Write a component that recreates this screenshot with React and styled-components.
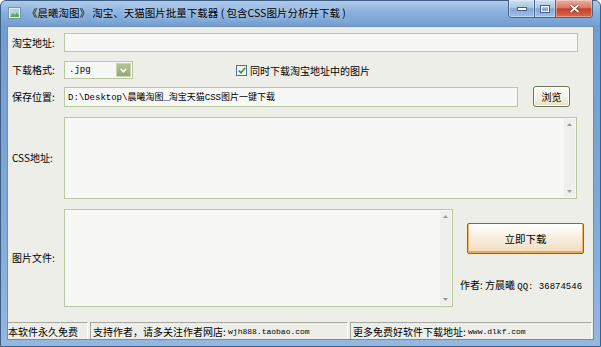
import React from "react"
import styled, { createGlobalStyle } from "styled-components"

const CJK = `"Noto Sans CJK SC", "Liberation Sans", sans-serif`
const MONO = `"Liberation Mono", "Noto Sans CJK SC", monospace`

const GlobalStyle = createGlobalStyle`
	html, body {
		margin: 0;
		padding: 0;
		background: #ffffff;
	}
	body {
		font-family: ${CJK};
		color: #000;
	}
`

const Window = styled.div`
	width: 601px;
	height: 347px;
	box-sizing: border-box;
	display: flex;
	flex-direction: column;
	border: 1px solid #3d5e85;
	border-radius: 6px 6px 0 0;
	padding: 0 6px 6px;
	background: linear-gradient(to bottom, #b0cbea 0px, #88afdc 12px, #729dd2 26px, #80a8d8 200px, #93b8e1 100%);
`

const TitleBar = styled.div`
	height: 25px;
	display: flex;
	align-items: flex-start;
	flex-shrink: 0;
`

const TitleIcon = styled.svg`
	margin: 6px 0 0 1px;
	flex-shrink: 0;
`

const Title = styled.div`
	margin: 5px 0 0 6px;
	font-size: 10.5px;
	line-height: 14px;
	white-space: nowrap;
	flex: 1;
	text-shadow: 0 0 6px rgba(255, 255, 255, 0.7);
`

const Controls = styled.div`
	display: flex;
	margin-right: 1px;
	margin-top: -1px;
	border: 1px solid #46638b;
	border-top: none;
	border-radius: 0 0 4px 4px;
	overflow: hidden;
`

const CtrlButton = styled.div`
	width: ${(p) => p.$w}px;
	height: 17px;
	display: flex;
	align-items: center;
	justify-content: center;
	box-sizing: border-box;
	border-left: ${(p) => (p.$first ? "none" : "1px solid #46638b")};
	background: ${(p) =>
		p.$close
			? "linear-gradient(to bottom, #eab0a2 0%, #d87a66 45%, #c5402a 52%, #d86a50 100%)"
			: "linear-gradient(to bottom, #cfe0f2 0%, #a9c4e5 45%, #84a7d3 52%, #a2c1e5 100%)"};
	box-shadow: inset 0 0 0 1px rgba(255, 255, 255, 0.35);
`

const Body = styled.div`
	flex: 1;
	display: flex;
	flex-direction: column;
	background: #eeeee9;
	border: 1px solid #6f8cb3;
`

const Form = styled.div`
	flex: 1;
	display: flex;
	flex-direction: column;
	padding: 6px 0 0 4px;
`

const Row = styled.div`
	display: flex;
	align-items: center;
	height: ${(p) => p.$h}px;
	margin-top: ${(p) => p.$mt || 0}px;
`

const Label = styled.div`
	width: 52px;
	flex-shrink: 0;
	font-size: 10px;
	line-height: 12px;
	white-space: nowrap;
	align-self: center;
`

const TextInput = styled.input`
	width: ${(p) => p.$w}px;
	height: ${(p) => p.$h}px;
	box-sizing: border-box;
	border: 1px solid #b9c7a2;
	background: #f7f7f5;
	padding: 0 3px;
	margin: 0;
	font-family: ${MONO};
	font-size: 9px;
	color: #000;
	outline: none;
`

const Combo = styled.div`
	width: 69px;
	height: 18px;
	box-sizing: border-box;
	border: 1px solid #b9c7a2;
	background: #f7f7f5;
	display: flex;
	align-items: center;
	justify-content: space-between;
	padding: 0 1px 0 4px;
	font-family: ${MONO};
	font-size: 9px;
`

const ComboArrow = styled.div`
	width: 15px;
	height: 14px;
	background: linear-gradient(to bottom, #b4c396, #96a973);
	border: 1px solid #c9d4b4;
	box-sizing: border-box;
	display: flex;
	align-items: center;
	justify-content: center;
`

const CheckWrap = styled.label`
	display: flex;
	align-items: center;
	margin-left: 103px;
	font-size: 10px;
	white-space: nowrap;
`

const CheckBox = styled.span`
	width: 11px;
	height: 11px;
	box-sizing: border-box;
	border: 1px solid #4f6f9c;
	background: linear-gradient(to bottom right, #e8ecf0, #ffffff);
	display: flex;
	align-items: center;
	justify-content: center;
	margin-right: 3px;
`

const SmallButton = styled.div`
	width: 37px;
	height: 21px;
	margin-left: 15px;
	box-sizing: border-box;
	border: 1px solid #6a7858;
	border-radius: 3px;
	background: linear-gradient(to bottom, #fdfdfb 0%, #f5f1e6 50%, #e9e0c8 100%);
	box-shadow: inset 0 0 0 1px #ffffff;
	display: flex;
	align-items: center;
	justify-content: center;
	font-size: 10px;
`

const TextBox = styled.div`
	width: ${(p) => p.$w}px;
	height: 100%;
	box-sizing: border-box;
	border: 1px solid #b9c7a2;
	background: #f7f7f5;
	display: flex;
	justify-content: flex-end;
	padding: 1px;
	flex-shrink: 0;
`

const ScrollTrack = styled.div`
	width: 11px;
	background: #efefeb;
	display: flex;
	flex-direction: column;
	justify-content: space-between;
	align-items: center;
	padding: 4px 0;
`

const Side = styled.div`
	display: flex;
	flex-direction: column;
	align-self: stretch;
	padding-left: 7px;
`

const BigButton = styled.div`
	width: 117px;
	height: 31px;
	margin: 14px 0 0 7px;
	box-sizing: border-box;
	border: 1px solid #66744a;
	border-radius: 2px;
	background: linear-gradient(to bottom, #ffffff 0%, #f8efe2 45%, #f1dcbc 100%);
	box-shadow: inset 1px 0 0 #f3b45a, inset -1px 0 0 #f3b45a, inset 0 -2px 0 #f0a94a;
	display: flex;
	align-items: center;
	justify-content: center;
	font-size: 10.5px;
`

const Author = styled.div`
	margin-top: 25px;
	font-size: 10px;
	line-height: 12px;
	white-space: nowrap;
`

const Mono = styled.span`
	font-family: ${MONO};
	font-size: ${(p) => p.$size || 8}px;
`

const StatusBar = styled.div`
	height: 17px;
	display: flex;
	gap: 2px;
	flex-shrink: 0;
	padding-right: 1px;
`

const Panel = styled.div`
	width: ${(p) => (p.$w ? `${p.$w}px` : "auto")};
	flex: ${(p) => (p.$w ? "none" : 1)};
	box-sizing: border-box;
	border-top: 1px solid #a7a7a2;
	border-left: ${(p) => (p.$first ? "none" : "1px solid #a7a7a2")};
	border-right: 1px solid #ffffff;
	display: flex;
	align-items: center;
	font-size: 10px;
	white-space: pre;
	padding-left: ${(p) => (p.$first ? 0 : 2)}px;
`

const ScrollBar = () => (
	<ScrollTrack>
		<svg width="5" height="3" viewBox="0 0 5 3">
			<path d="M0 3 L2.5 0 L5 3 Z" fill="#9a9a96" />
		</svg>
		<svg width="5" height="3" viewBox="0 0 5 3">
			<path d="M0 0 L2.5 3 L5 0 Z" fill="#9a9a96" />
		</svg>
	</ScrollTrack>
)

const App = () => (
	<>
		<GlobalStyle />
		<Window>
			<TitleBar>
				<TitleIcon width="13" height="12" viewBox="0 0 13 12">
					<rect x="0.5" y="0.5" width="12" height="11" fill="#e4eef6" stroke="#7893ad" />
					<rect x="2" y="2" width="9" height="8" fill="#a9d2ee" />
					<path d="M2 10 L5 6 L7 8 L9 5.5 L11 8 L11 10 Z" fill="#62a846" />
					<circle cx="4" cy="4" r="1" fill="#f7e27a" />
				</TitleIcon>
				<Title>《晨曦淘图》 淘宝、天猫图片批量下载器 ( 包含CSS图片分析并下载 )</Title>
				<Controls>
					<CtrlButton $w={25} $first>
						<svg width="10" height="4" viewBox="0 0 10 4">
							<rect x="0.5" y="0.5" width="9" height="3" fill="#ffffff" stroke="#44608a" />
						</svg>
					</CtrlButton>
					<CtrlButton $w={21}>
						<svg width="10" height="8" viewBox="0 0 10 8">
							<rect x="0.5" y="0.5" width="9" height="7" fill="none" stroke="#44608a" />
							<rect x="1.5" y="1.5" width="7" height="5" fill="none" stroke="#ffffff" />
						</svg>
					</CtrlButton>
					<CtrlButton $w={37} $close>
						<svg width="11" height="9" viewBox="0 0 11 9">
							<path d="M1.5 1 L9.5 8 M9.5 1 L1.5 8" stroke="#6d2015" strokeWidth="3" />
							<path d="M1.5 1 L9.5 8 M9.5 1 L1.5 8" stroke="#ffffff" strokeWidth="2" />
						</svg>
					</CtrlButton>
				</Controls>
			</TitleBar>
			<Body>
				<Form>
					<Row $h={19}>
						<Label>淘宝地址:</Label>
						<TextInput $w={514} $h={19} readOnly defaultValue="" />
					</Row>
					<Row $h={18} $mt={9}>
						<Label>下载格式:</Label>
						<Combo>
							<span>.jpg</span>
							<ComboArrow>
								<svg width="7" height="5" viewBox="0 0 7 5">
									<path d="M0.8 0.8 L3.5 3.8 L6.2 0.8" fill="none" stroke="#ffffff" strokeWidth="1.6" />
								</svg>
							</ComboArrow>
						</Combo>
						<CheckWrap>
							<CheckBox>
								<svg width="8" height="7" viewBox="0 0 8 7">
									<path d="M0.8 3.6 L3 5.8 L7.2 0.8" fill="none" stroke="#2f9a2f" strokeWidth="1.6" />
								</svg>
							</CheckBox>
							同时下载淘宝地址中的图片
						</CheckWrap>
					</Row>
					<Row $h={21} $mt={7}>
						<Label>保存位置:</Label>
						<TextInput $w={454} $h={20} readOnly defaultValue="D:\Desktop\晨曦淘图_淘宝天猫CSS图片一键下载" />
						<SmallButton>浏览</SmallButton>
					</Row>
					<Row $h={82} $mt={10}>
						<Label>CSS地址:</Label>
						<TextBox $w={513}>
							<ScrollBar />
						</TextBox>
					</Row>
					<Row $h={98} $mt={10}>
						<Label>图片文件:</Label>
						<TextBox $w={389}>
							<ScrollBar />
						</TextBox>
						<Side>
							<BigButton>立即下载</BigButton>
							<Author>
								作者: 方晨曦 <Mono $size={9}>QQ: 36874546</Mono>
							</Author>
						</Side>
					</Row>
				</Form>
				<StatusBar>
					<Panel $w={80} $first>本软件永久免费</Panel>
					<Panel $w={258}>
						支持作者，请多关注作者网店: <Mono>wjh888.taobao.com</Mono>
					</Panel>
					<Panel>
						更多免费好软件下载地址: <Mono>www.dlkf.com</Mono>
					</Panel>
				</StatusBar>
			</Body>
		</Window>
	</>
)

export default App
